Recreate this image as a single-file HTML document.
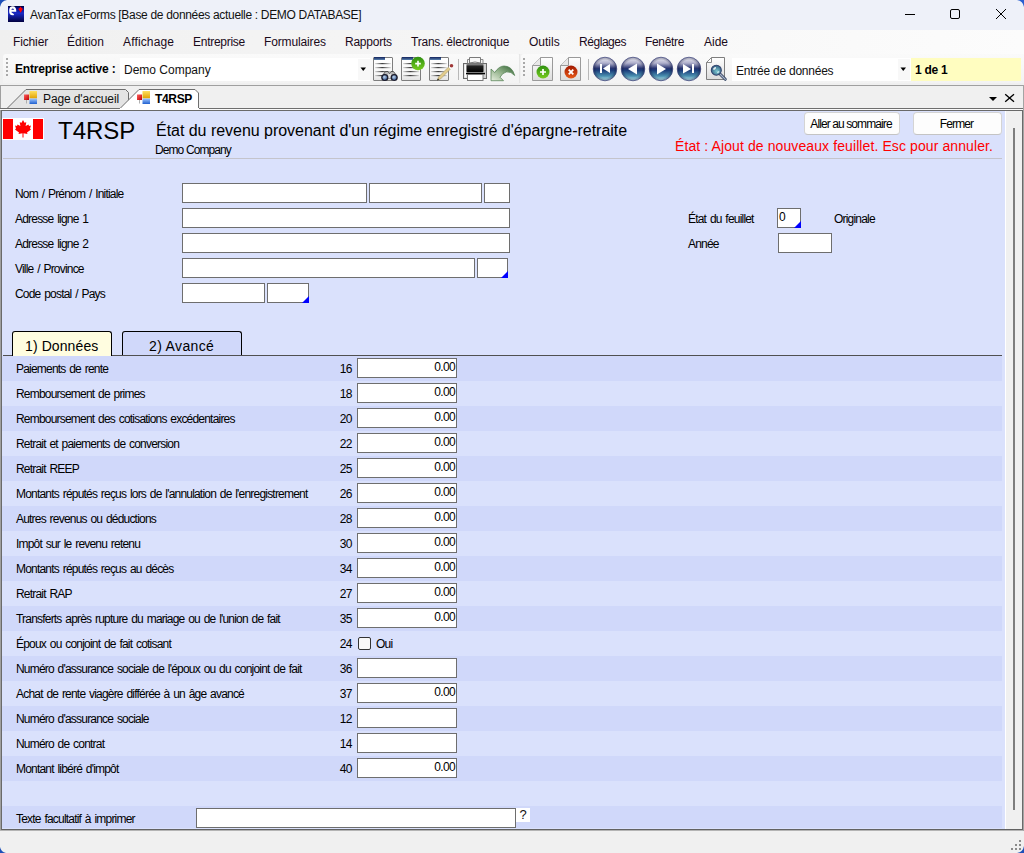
<!DOCTYPE html>
<html><head><meta charset="utf-8">
<style>
*{box-sizing:border-box}
html,body{margin:0;padding:0;width:1024px;height:853px;overflow:hidden;background:#f0f0f0;font-family:"Liberation Sans",sans-serif;position:relative}
.a{position:absolute}
.t{position:absolute;white-space:nowrap;line-height:1}
.menu{position:absolute;top:36px;font-size:12px;letter-spacing:-0.12px;color:#1a0a1a;white-space:nowrap;line-height:1}
.lbl{position:absolute;font-size:12px;letter-spacing:-0.8px;word-spacing:1.2px;color:#000;white-space:nowrap;line-height:1}
.box{position:absolute;background:#fff;border:1px solid #6e6e6e;height:20px}
.row{position:absolute;left:2px;width:1000px;height:25px}
.dk{background:#d0d8fa}
.code{position:absolute;font-size:12px;letter-spacing:-0.5px;color:#000;line-height:1;text-align:right;width:40px}
.val{position:absolute;right:1px;top:2px;font-size:12px;letter-spacing:-0.65px;color:#000;line-height:1}
.tri{position:absolute;right:-1px;bottom:-1px;width:0;height:0;border-left:7px solid transparent;border-bottom:7px solid #0000ff}
.chk{position:absolute;width:13px;height:13px;border:1px solid #333;border-radius:2px;background:#f8f8f8}
.btn{position:absolute;background:#fdfdfd;border:1px solid #d4d4d4;border-bottom-color:#c4c4c4;border-radius:4px;font-size:12px;letter-spacing:-0.9px;text-align:center;color:#000;line-height:1}

</style></head><body>
<div class="a" style="left:0;top:0;width:1024px;height:30px;background:#eef1f9"></div>
<!-- title bar -->
<svg class="a" style="left:0;top:0" width="1024" height="30">
 <path d="M0 0 H7 Q1 1 0 7 Z" fill="#1d4fb8"/>
 <path d="M1024 0 H1017 Q1023 1 1024 7 Z" fill="#2a5fd0"/>
 <defs><linearGradient id="lg1" x1="0" y1="0" x2="0" y2="1"><stop offset="0" stop-color="#000030"/><stop offset="0.1" stop-color="#000a80"/><stop offset="0.45" stop-color="#1a2ac8"/><stop offset="1" stop-color="#000040"/></linearGradient></defs>
 <rect x="8" y="6" width="16" height="16" fill="url(#lg1)"/>
 <path d="M10.3 10.8 H15.2 Q15.2 7.4 12.8 7.4 Q10.2 7.4 10.2 10.8 Q10.2 14.3 12.6 14.3 Q13.2 14.3 13.6 14" fill="none" stroke="#fff" stroke-width="2.1"/>
 <path d="M20.6 6.5 L21.8 8.3 L23 8.8 L22 10.3 L20.8 12.5 L20.4 12.5 L19.2 10.3 L18.2 8.8 L19.4 8.3 Z" fill="#f00"/>
 <path d="M905 14.5 H915" stroke="#000" stroke-width="1"/>
 <rect x="950.5" y="9.5" width="9" height="9" rx="1.5" fill="none" stroke="#000" stroke-width="1"/>
 <path d="M996 9 L1006 19 M1006 9 L996 19" stroke="#000" stroke-width="1"/>
</svg>
<div class="t" style="left:30px;top:9px;font-size:12px;letter-spacing:-0.32px;color:#111">AvanTax eForms [Base de données actuelle : DEMO DATABASE]</div>
<!-- menu -->
<div class="a" style="left:0;top:30px;width:1024px;height:24px;background:linear-gradient(to right,#f0f0f0,#fcfcfc)"></div>
<div class="menu" style="left:13px;letter-spacing:-0.14px">Fichier</div>
<div class="menu" style="left:67px;letter-spacing:0.05px">Édition</div>
<div class="menu" style="left:123px;letter-spacing:0.15px">Affichage</div>
<div class="menu" style="left:193px;letter-spacing:-0.27px">Entreprise</div>
<div class="menu" style="left:264px;letter-spacing:-0.14px">Formulaires</div>
<div class="menu" style="left:345px;letter-spacing:-0.24px">Rapports</div>
<div class="menu" style="left:411px;letter-spacing:-0.22px">Trans. électronique</div>
<div class="menu" style="left:529px;letter-spacing:0.0px">Outils</div>
<div class="menu" style="left:579px;letter-spacing:-0.45px">Réglages</div>
<div class="menu" style="left:645px;letter-spacing:-0.33px">Fenêtre</div>
<div class="menu" style="left:704px;letter-spacing:0.0px">Aide</div>
<!-- toolbar -->
<div class="a" style="left:3px;top:54px;width:517px;height:29px;background:linear-gradient(#fafafa,#f3f3f3);border-radius:3px 3px 0 0"></div>
<div class="a" style="left:521px;top:54px;width:503px;height:29px;background:linear-gradient(#fafafa,#f3f3f3);border-radius:3px 0 0 0"></div>
<svg class="a" style="left:0;top:54px" width="1024" height="31">
 <g fill="#a8a8a8">
  <rect x="6" y="4" width="2" height="2"/><rect x="6" y="8" width="2" height="2"/><rect x="6" y="12" width="2" height="2"/><rect x="6" y="16" width="2" height="2"/><rect x="6" y="20" width="2" height="2"/>
  <rect x="523" y="4" width="2" height="2"/><rect x="523" y="8" width="2" height="2"/><rect x="523" y="12" width="2" height="2"/><rect x="523" y="16" width="2" height="2"/><rect x="523" y="20" width="2" height="2"/>
 </g>
</svg>
<div class="t" style="left:15px;top:63px;font-size:12px;font-weight:bold;letter-spacing:-0.19px;color:#000">Entreprise active :</div>
<div class="a" style="left:120px;top:58px;width:250px;height:23px;background:#fff"></div>
<div class="a" style="left:358px;top:59px;width:12px;height:21px;background:#f8f8f8"></div>
<svg class="a" style="left:360px;top:67px" width="8" height="5"><path d="M0.5 0.5 H6 L3.25 4 Z" fill="#000"/></svg>
<div class="t" style="left:124px;top:64px;font-size:12px;color:#111">Demo Company</div>
<div class="a" style="left:732px;top:58px;width:179px;height:23px;background:#fff"></div>
<div class="a" style="left:898px;top:59px;width:12px;height:21px;background:#f8f8f8"></div>
<svg class="a" style="left:900px;top:67px" width="8" height="5"><path d="M0.5 0.5 H6 L3.25 4 Z" fill="#000"/></svg>
<div class="t" style="left:736px;top:65px;font-size:12px;letter-spacing:-0.24px;color:#111">Entrée de données</div>
<div class="a" style="left:911px;top:58px;width:110px;height:23px;background:#fffdc0"></div>
<div class="t" style="left:915px;top:64px;font-size:12px;font-weight:bold;letter-spacing:-0.25px;color:#000">1 de 1</div>
<!-- tab strip -->
<svg class="a" style="left:0;top:85px" width="1024" height="26">
 <rect x="0" y="0" width="1024" height="26" fill="#f0f0f0"/>
 <path d="M0 0.5 H1024" stroke="#a0a0a0"/>
 <path d="M0.5 0 V26" stroke="#a0a0a0"/>
 <path d="M1023.5 0 V26" stroke="#a0a0a0"/>
 <path d="M0 23.5 H1024" stroke="#6e6e6e"/>
 <path d="M0 24.5 H1024" stroke="#fafafa"/>
 <path d="M7 23.5 L26 4.5 H125.5 L128.5 7.5 V23.5 Z" fill="#e4e4e4" stroke="#6e6e6e"/>
 <path d="M119.5 24 L139 4.5 H195 L198.5 8 V23.5 H1024" fill="#ffffff" stroke="#6e6e6e"/>
 <rect x="120" y="23" width="79" height="2" fill="#fff"/>
 <path d="M989 12 H997 L993 16 Z" fill="#000"/>
 <path d="M1005.2 9.3 L1014 16.7 M1014 9.3 L1005.2 16.7" stroke="#000" stroke-width="1.35"/>
</svg>
<div class="t" style="left:43px;top:93px;font-size:12px;letter-spacing:-0.12px;color:#111">Page d'accueil</div>
<div class="t" style="left:155px;top:93px;font-size:12px;font-weight:bold;letter-spacing:-0.34px;color:#000">T4RSP</div>
<!-- form frame -->
<div class="a" style="left:0;top:110px;width:1px;height:721px;background:#a0a0a0"></div>
<div class="a" style="left:1px;top:110px;width:1022px;height:720px;background:#dae1fc;border:1px solid #6a6a6a;border-bottom-color:#626262"></div>
<div class="a" style="left:0;top:830px;width:1024px;height:1px;background:#b4b4b4"></div>
<div class="a" style="left:1023px;top:85px;width:1px;height:746px;background:#a4a4a4"></div>

<svg class="a" style="left:0;top:0" width="1024" height="90">
 <defs>
  <linearGradient id="hdr" x1="0" y1="0" x2="0" y2="1"><stop offset="0" stop-color="#10205a"/><stop offset="1" stop-color="#5a82b0"/></linearGradient>
  <linearGradient id="docbg" x1="0" y1="0" x2="0" y2="1"><stop offset="0" stop-color="#ffffff"/><stop offset="0.7" stop-color="#f6f6f6"/><stop offset="1" stop-color="#e2e2e2"/></linearGradient>
  <linearGradient id="ln" x1="0" y1="0" x2="1" y2="0"><stop offset="0" stop-color="#000" stop-opacity="0.1"/><stop offset="0.45" stop-color="#000" stop-opacity="0.75"/><stop offset="1" stop-color="#000" stop-opacity="0.1"/></linearGradient>
  <linearGradient id="grn" x1="0" y1="0" x2="0" y2="1"><stop offset="0" stop-color="#2e9010"/><stop offset="1" stop-color="#78cc20"/></linearGradient>
  <linearGradient id="red" x1="0" y1="0" x2="0" y2="1"><stop offset="0" stop-color="#a01800"/><stop offset="1" stop-color="#e85a18"/></linearGradient>
  <linearGradient id="navg" x1="0" y1="0" x2="0" y2="1"><stop offset="0" stop-color="#eeeef6"/><stop offset="0.25" stop-color="#b0b0cc"/><stop offset="0.47" stop-color="#283470"/><stop offset="0.55" stop-color="#1a3a78"/><stop offset="0.8" stop-color="#4a90b0"/><stop offset="1" stop-color="#c8f0f8"/></linearGradient>
  <radialGradient id="navr" cx="0.5" cy="0.5" r="0.5"><stop offset="0.75" stop-color="#000" stop-opacity="0"/><stop offset="1" stop-color="#101850" stop-opacity="0.4"/></radialGradient>
  <linearGradient id="prn" x1="0" y1="0" x2="0" y2="1"><stop offset="0" stop-color="#9a9a9a"/><stop offset="0.3" stop-color="#202020"/><stop offset="1" stop-color="#000"/></linearGradient>
  <linearGradient id="undo" x1="0" y1="1" x2="1" y2="0"><stop offset="0" stop-color="#e8f0e0"/><stop offset="0.5" stop-color="#90b088"/><stop offset="1" stop-color="#2e6030"/></linearGradient>
  <linearGradient id="pg" x1="0" y1="0" x2="0" y2="1"><stop offset="0" stop-color="#fff"/><stop offset="1" stop-color="#dcdcdc"/></linearGradient>
  <radialGradient id="lens2" cx="0.4" cy="0.35" r="0.7"><stop offset="0" stop-color="#c0d8f0"/><stop offset="1" stop-color="#3a5a90"/></radialGradient>
  <radialGradient id="lens" cx="0.55" cy="0.6" r="0.6"><stop offset="0" stop-color="#7cc8d0"/><stop offset="1" stop-color="#2e5a80"/></radialGradient>
 </defs>
 <!-- doc 1 binoculars -->
 <g transform="translate(373,57)">
  <rect x="0.5" y="0.5" width="19" height="23" rx="0.5" fill="url(#docbg)" stroke="#7e7e7e"/>
  <rect x="1" y="0" width="11" height="3" fill="url(#hdr)"/>
  <rect x="2" y="6" width="16" height="1.2" fill="url(#ln)"/><rect x="2" y="10" width="16" height="1.2" fill="url(#ln)"/><rect x="2" y="14" width="16" height="1.2" fill="url(#ln)"/><rect x="2" y="18" width="16" height="1.2" fill="url(#ln)"/>
 </g>
 <g transform="translate(381,70)">
  <path d="M1.5 5.5 L4.5 1.5 H7 L8.5 3.5 L10 1.5 H12.5 L15.5 5.5 L14 8 H3 Z" fill="#b8b8b8" stroke="#3a3a3a" stroke-width="0.8"/>
  <rect x="7" y="4" width="3" height="4" fill="#e0e0e0"/>
  <circle cx="3.8" cy="7.5" r="3.6" fill="#1a1a2a"/><circle cx="13.2" cy="7.5" r="3.6" fill="#1a1a2a"/>
  <circle cx="3.8" cy="7.6" r="2.3" fill="url(#lens2)"/><circle cx="13.2" cy="7.6" r="2.3" fill="url(#lens2)"/>
 </g>
 <!-- doc 2 plus -->
 <g transform="translate(401,57)">
  <rect x="0.5" y="0.5" width="19" height="23" rx="0.5" fill="url(#docbg)" stroke="#7e7e7e"/>
  <rect x="1" y="0" width="11" height="3" fill="url(#hdr)"/>
  <rect x="2" y="6" width="16" height="1.2" fill="url(#ln)"/><rect x="2" y="10" width="16" height="1.2" fill="url(#ln)"/><rect x="2" y="14" width="16" height="1.2" fill="url(#ln)"/><rect x="2" y="18" width="16" height="1.2" fill="url(#ln)"/>
  <circle cx="17" cy="6.5" r="6.8" fill="url(#grn)"/>
  <path d="M17 3.8 V9.4 M14.2 6.6 H19.8" stroke="#fff" stroke-width="1.6"/>
 </g>
 <!-- doc 3 pencil -->
 <g transform="translate(429,57)">
  <rect x="0.5" y="0.5" width="19" height="23" rx="0.5" fill="url(#docbg)" stroke="#7e7e7e"/>
  <rect x="1" y="0" width="11" height="3" fill="url(#hdr)"/>
  <rect x="2" y="6" width="16" height="1.2" fill="url(#ln)"/><rect x="2" y="10" width="16" height="1.2" fill="url(#ln)"/><rect x="2" y="14" width="16" height="1.2" fill="url(#ln)"/><rect x="2" y="18" width="16" height="1.2" fill="url(#ln)"/>
  <path d="M8.5 23 L9.5 20 L19.5 10 L21.5 12 L11.5 22 Z" fill="#e2cc8c" stroke="#9a8a5a" stroke-width="0.5"/><path d="M19.5 10 L21 8.5 L23 10.5 L21.5 12 Z" fill="#fff"/>
  <path d="M8 23.5 L9 21.5 L10 22.5 Z" fill="#000"/>
  <circle cx="22.5" cy="8.8" r="1.8" fill="#a03838"/>
 </g>
 <rect x="458" y="59" width="1" height="21" fill="#b8b8b8"/>
 <!-- printer -->
 <g transform="translate(463,57)">
  <path d="M4.5 6.5 V2.5 H20 V6.5" fill="#f0f0f0" stroke="#8a8a8a"/>
  <path d="M6.5 6 V0.5 H17.5 V6 Q12 4 6.5 6 Z" fill="#f8f8f8" stroke="#7a7a7a"/>
  <rect x="0.5" y="6.5" width="23" height="15" fill="#d0d0d0" stroke="#6a6a6a"/><rect x="1.5" y="7.5" width="2" height="13" fill="#fff"/>
  <rect x="3.5" y="6.8" width="17" height="8.5" rx="1" fill="url(#prn)"/>
  <rect x="3" y="15.8" width="19" height="1.5" fill="#000"/>
  <rect x="4.5" y="17.5" width="15.5" height="6" fill="#fff" stroke="#7a7a7a"/>
 </g>
 <!-- undo -->
 <path d="M491 69 L494.8 72.5 Q499 66 504 66 Q512 66 514.7 75.5 Q511 71.2 506.5 71.9 Q502.5 72.6 500 77.2 L503.5 80.7 L491 80.7 Z" fill="url(#undo)" stroke="#4a7a4a" stroke-width="0.7"/>
 <rect x="519" y="54" width="1" height="29" fill="#e6e6e6"/>
 <!-- new doc -->
 <g transform="translate(532,57)">
  <path d="M0.5 8.5 L8.5 0.5 H20.5 V23.5 H0.5 Z" fill="url(#pg)" stroke="#9a9a9a"/>
  <path d="M0.5 8.5 L8.5 8.5 L8.5 0.5" fill="#e8e8e8" stroke="#9a9a9a"/>
  <circle cx="11" cy="15" r="6.5" fill="url(#grn)"/>
  <path d="M11 12 V18 M8 15 H14" stroke="#fff" stroke-width="1.7"/>
 </g>
 <!-- delete doc -->
 <g transform="translate(560,57)">
  <path d="M0.5 8.5 L8.5 0.5 H20.5 V23.5 H0.5 Z" fill="url(#pg)" stroke="#9a9a9a"/>
  <path d="M0.5 8.5 L8.5 8.5 L8.5 0.5" fill="#e8e8e8" stroke="#9a9a9a"/>
  <circle cx="11" cy="15" r="6.5" fill="url(#red)"/>
  <path d="M8.7 12.7 L13.3 17.3 M13.3 12.7 L8.7 17.3" stroke="#fff" stroke-width="1.8"/>
 </g>
 <rect x="588" y="59" width="1" height="21" fill="#b8b8b8"/>
 <!-- nav -->
 <g>
  <circle cx="605" cy="69" r="11.8" fill="url(#navg)" stroke="#5a6090" stroke-width="0.8"/><circle cx="605" cy="69" r="11.8" fill="url(#navr)"/>
  <rect x="600" y="64" width="2" height="9" fill="#fff"/><path d="M603 68.5 L610 64 V73 Z" fill="#fff"/>
  <circle cx="633" cy="69" r="11.8" fill="url(#navg)" stroke="#5a6090" stroke-width="0.8"/><circle cx="633" cy="69" r="11.8" fill="url(#navr)"/>
  <path d="M628 69 L637 63.5 V74.5 Z" fill="#fff"/>
  <circle cx="661" cy="69" r="11.8" fill="url(#navg)" stroke="#5a6090" stroke-width="0.8"/><circle cx="661" cy="69" r="11.8" fill="url(#navr)"/>
  <path d="M666 69 L657 63.5 V74.5 Z" fill="#fff"/>
  <circle cx="689" cy="69" r="11.8" fill="url(#navg)" stroke="#5a6090" stroke-width="0.8"/><circle cx="689" cy="69" r="11.8" fill="url(#navr)"/>
  <rect x="692" y="64" width="2" height="9" fill="#fff"/><path d="M691 69 L683 64 V73.5 Z" fill="#fff"/>
 </g>
 <!-- doc magnifier -->
 <g transform="translate(706,57)">
  <path d="M0.5 5.5 L5.5 0.5 H18.5 V22.5 H0.5 Z" fill="url(#pg)" stroke="#7e7e7e"/>
  <path d="M0.5 5.5 H5.5 V0.5 Z" fill="#fff" stroke="#8a8a8a"/>
  <path d="M14 17 L19.3 22.3" stroke="#3a4a68" stroke-width="3" stroke-linecap="round"/>
  <path d="M14 17 L19.3 22.3" stroke="#a8b4c8" stroke-width="1.2" stroke-linecap="round"/>
  <circle cx="10.3" cy="13.2" r="5" fill="url(#lens)" stroke="#34446e" stroke-width="1.1"/>
  <ellipse cx="8.6" cy="11.4" rx="1.8" ry="1" transform="rotate(-40 8.6 11.4)" fill="#fff" opacity="0.85"/>
  <ellipse cx="12.2" cy="15.2" rx="1.3" ry="0.8" transform="rotate(-40 12.2 15.2)" fill="#e8ffff" opacity="0.7"/>
 </g>
</svg>

<div class="row dk" style="top:356px"></div>
<div class="lbl" style="left:16px;top:363px">Paiements de rente</div>
<div class="code" style="left:312px;top:363px">16</div>
<div class="box" style="left:357px;top:358px;width:100px"><span class="val">0.00</span></div>
<div class="row" style="top:381px"></div>
<div class="lbl" style="left:16px;top:388px">Remboursement de primes</div>
<div class="code" style="left:312px;top:388px">18</div>
<div class="box" style="left:357px;top:383px;width:100px"><span class="val">0.00</span></div>
<div class="row dk" style="top:406px"></div>
<div class="lbl" style="left:16px;top:413px">Remboursement des cotisations excédentaires</div>
<div class="code" style="left:312px;top:413px">20</div>
<div class="box" style="left:357px;top:408px;width:100px"><span class="val">0.00</span></div>
<div class="row" style="top:431px"></div>
<div class="lbl" style="left:16px;top:438px">Retrait et paiements de conversion</div>
<div class="code" style="left:312px;top:438px">22</div>
<div class="box" style="left:357px;top:433px;width:100px"><span class="val">0.00</span></div>
<div class="row dk" style="top:456px"></div>
<div class="lbl" style="left:16px;top:463px">Retrait REEP</div>
<div class="code" style="left:312px;top:463px">25</div>
<div class="box" style="left:357px;top:458px;width:100px"><span class="val">0.00</span></div>
<div class="row" style="top:481px"></div>
<div class="lbl" style="left:16px;top:488px">Montants réputés reçus lors de l'annulation de l'enregistrement</div>
<div class="code" style="left:312px;top:488px">26</div>
<div class="box" style="left:357px;top:483px;width:100px"><span class="val">0.00</span></div>
<div class="row dk" style="top:506px"></div>
<div class="lbl" style="left:16px;top:513px">Autres revenus ou déductions</div>
<div class="code" style="left:312px;top:513px">28</div>
<div class="box" style="left:357px;top:508px;width:100px"><span class="val">0.00</span></div>
<div class="row" style="top:531px"></div>
<div class="lbl" style="left:16px;top:538px">Impôt sur le revenu retenu</div>
<div class="code" style="left:312px;top:538px">30</div>
<div class="box" style="left:357px;top:533px;width:100px"><span class="val">0.00</span></div>
<div class="row dk" style="top:556px"></div>
<div class="lbl" style="left:16px;top:563px">Montants réputés reçus au décès</div>
<div class="code" style="left:312px;top:563px">34</div>
<div class="box" style="left:357px;top:558px;width:100px"><span class="val">0.00</span></div>
<div class="row" style="top:581px"></div>
<div class="lbl" style="left:16px;top:588px">Retrait RAP</div>
<div class="code" style="left:312px;top:588px">27</div>
<div class="box" style="left:357px;top:583px;width:100px"><span class="val">0.00</span></div>
<div class="row dk" style="top:606px"></div>
<div class="lbl" style="left:16px;top:613px">Transferts après rupture du mariage ou de l'union de fait</div>
<div class="code" style="left:312px;top:613px">35</div>
<div class="box" style="left:357px;top:608px;width:100px"><span class="val">0.00</span></div>
<div class="row" style="top:631px"></div>
<div class="lbl" style="left:16px;top:638px">Époux ou conjoint de fait cotisant</div>
<div class="code" style="left:312px;top:638px">24</div>
<div class="chk" style="left:358px;top:637px"></div>
<div class="lbl" style="left:376px;top:638px">Oui</div>
<div class="row dk" style="top:656px"></div>
<div class="lbl" style="left:16px;top:663px">Numéro d'assurance sociale de l'époux ou du conjoint de fait</div>
<div class="code" style="left:312px;top:663px">36</div>
<div class="box" style="left:357px;top:658px;width:100px"></div>
<div class="row" style="top:681px"></div>
<div class="lbl" style="left:16px;top:688px">Achat de rente viagère différée à un âge avancé</div>
<div class="code" style="left:312px;top:688px">37</div>
<div class="box" style="left:357px;top:683px;width:100px"><span class="val">0.00</span></div>
<div class="row dk" style="top:706px"></div>
<div class="lbl" style="left:16px;top:713px">Numéro d'assurance sociale</div>
<div class="code" style="left:312px;top:713px">12</div>
<div class="box" style="left:357px;top:708px;width:100px"></div>
<div class="row" style="top:731px"></div>
<div class="lbl" style="left:16px;top:738px">Numéro de contrat</div>
<div class="code" style="left:312px;top:738px">14</div>
<div class="box" style="left:357px;top:733px;width:100px"></div>
<div class="row dk" style="top:756px"></div>
<div class="lbl" style="left:16px;top:763px">Montant libéré d'impôt</div>
<div class="code" style="left:312px;top:763px">40</div>
<div class="box" style="left:357px;top:758px;width:100px"><span class="val">0.00</span></div>
<div class="a" style="left:3px;top:119px;width:40px;height:20px;background:#fff"></div>
<div class="a" style="left:3px;top:119px;width:10px;height:20px;background:#f00"></div>
<div class="a" style="left:33px;top:119px;width:10px;height:20px;background:#f00"></div>
<div class="t" style="left:58px;top:119px;font-size:24px;color:#000">T4RSP</div>
<div class="t" style="left:156px;top:123px;font-size:16px;letter-spacing:-0.03px;color:#000">État du revenu provenant d'un régime enregistré d'épargne-retraite</div>
<div class="lbl" style="left:155px;top:144px;letter-spacing:-0.95px;word-spacing:0.5px">Demo Company</div>
<div class="t" style="left:675px;top:139px;font-size:14px;letter-spacing:0.1px;color:#f00">État : Ajout de nouveaux feuillet. Esc pour annuler.</div>
<div class="btn" style="left:804px;top:112px;width:96px;height:23px;padding-top:5px;padding-right:2px">Aller au sommaire</div>
<div class="btn" style="left:913px;top:112px;width:89px;height:23px;padding-top:5px;padding-right:2px">Fermer</div>
<div class="a" style="left:3px;top:158px;width:999px;height:1px;background:#c4c4cc"></div>

<div class="lbl" style="left:15px;top:188px">Nom / Prénom / Initiale</div>
<div class="lbl" style="left:15px;top:213px">Adresse ligne 1</div>
<div class="lbl" style="left:15px;top:238px">Adresse ligne 2</div>
<div class="lbl" style="left:15px;top:263px">Ville / Province</div>
<div class="lbl" style="left:15px;top:288px">Code postal / Pays</div>
<div class="box" style="left:182px;top:183px;width:185px"></div>
<div class="box" style="left:369px;top:183px;width:113px"></div>
<div class="box" style="left:484px;top:183px;width:26px"></div>
<div class="box" style="left:182px;top:208px;width:328px"></div>
<div class="box" style="left:182px;top:233px;width:328px"></div>
<div class="box" style="left:182px;top:258px;width:293px"></div>
<div class="box" style="left:477px;top:258px;width:31px"><div class="tri"></div></div>
<div class="box" style="left:182px;top:283px;width:83px"></div>
<div class="box" style="left:267px;top:283px;width:42px"><div class="tri"></div></div>

<div class="lbl" style="left:688px;top:213px">État du feuillet</div>
<div class="box" style="left:777px;top:208px;width:24px"><div class="tri"></div><span class="val" style="left:1px;right:auto;top:2px;letter-spacing:0">0</span></div>
<div class="lbl" style="left:834px;top:213px">Originale</div>
<div class="lbl" style="left:688px;top:238px">Année</div>
<div class="box" style="left:778px;top:233px;width:54px"></div>

<div class="a" style="left:3px;top:355px;width:999px;height:1px;background:#505050"></div>
<div class="a" style="left:12px;top:331px;width:100px;height:25px;background:#fffde0;border:1px solid #000;border-bottom:none;border-radius:3px 3px 0 0"></div>
<div class="t" style="left:25px;top:339px;font-size:14px;letter-spacing:0.1px;color:#000">1) Données</div>
<div class="a" style="left:122px;top:331px;width:120px;height:24px;background:#d0d8fa;border:1px solid #000;border-bottom:none;border-radius:3px 3px 0 0"></div>
<div class="t" style="left:149px;top:339px;font-size:14px;letter-spacing:0.35px;color:#000">2) Avancé</div>

<div class="row dk" style="top:806px;height:22px"></div>
<div class="lbl" style="left:16px;top:813px">Texte facultatif à imprimer</div>
<div class="box" style="left:196px;top:808px;width:320px"></div>
<div class="a" style="left:516px;top:808px;width:14px;height:14px;background:#fff;font-size:13px;text-align:center;line-height:14px;color:#111">?</div>

<div class="a" style="left:1005px;top:111px;width:17px;height:718px;background:#f0f0f0;border-left:1px solid #fff"></div>
<div class="a" style="left:1013px;top:128px;width:2px;height:682px;background:#7e7e7e"></div>

<!-- flag -->
<svg class="a" style="left:2px;top:118px" width="42" height="22">
 <rect x="0" y="0" width="42" height="22" fill="#fff"/>
 <rect x="1" y="1" width="10" height="20" fill="#f00"/>
 <rect x="31" y="1" width="10" height="20" fill="#f00"/>
 <g transform="translate(13,2)"><path d="M8 0 L9.5 2.8 L11.3 2.2 L10.6 6 L13.5 4.5 L14 6 L16 5.5 L15 8.5 L16 9.5 L12 12.5 L12.5 14 L8.5 13.2 L8.5 17.5 L7.5 17.5 L7.5 13.2 L3.5 14 L4 12.5 L0 9.5 L1 8.5 L0 5.5 L2 6 L2.5 4.5 L5.4 6 L4.7 2.2 L6.5 2.8 Z" fill="#f00"/></g>
</svg>
<!-- tab icons -->
<svg class="a" style="left:0;top:88px" width="220" height="20">
 <defs>
  <linearGradient id="ty" x1="0" y1="0" x2="0" y2="1"><stop offset="0" stop-color="#ffe060"/><stop offset="1" stop-color="#e0a000"/></linearGradient>
  <linearGradient id="tb" x1="0" y1="0" x2="0" y2="1"><stop offset="0" stop-color="#a0c8ff"/><stop offset="1" stop-color="#2060d0"/></linearGradient>
  <linearGradient id="tr" x1="0" y1="0" x2="1" y2="1"><stop offset="0" stop-color="#ff6060"/><stop offset="1" stop-color="#c00000"/></linearGradient>
 </defs>
 <g transform="translate(24,3)">
  <rect x="0" y="3.5" width="5" height="5.5" fill="url(#tr)"/><rect x="2" y="9" width="1" height="3.5" fill="#b0b0b0"/>
  <rect x="5.5" y="0" width="7.5" height="7.5" fill="url(#ty)"/><rect x="5.5" y="7.5" width="7.5" height="5.5" fill="url(#tb)"/>
 </g>
 <g transform="translate(137,3)">
  <rect x="0" y="3.5" width="5" height="5.5" fill="url(#tr)"/><rect x="2" y="9" width="1" height="3.5" fill="#b0b0b0"/>
  <rect x="5.5" y="0" width="7.5" height="7.5" fill="url(#ty)"/><rect x="5.5" y="7.5" width="7.5" height="5.5" fill="url(#tb)"/>
 </g>
</svg>
<!-- status bar grip + corners -->
<svg class="a" style="left:0;top:831px" width="1024" height="22">
 <g fill="#8a8a8a">
  <rect x="1019" y="9" width="2" height="2"/>
  <rect x="1015" y="13" width="2" height="2"/><rect x="1019" y="13" width="2" height="2"/>
  <rect x="1011" y="17" width="2" height="2"/><rect x="1015" y="17" width="2" height="2"/><rect x="1019" y="17" width="2" height="2"/>
 </g>
 <path d="M0 22 V16 Q1 21 6 22 Z" fill="#1d4fb8"/>
 <path d="M1024 22 V15 Q1023 21 1017 22 Z" fill="#1d4fb8"/>
</svg>

</body></html>
